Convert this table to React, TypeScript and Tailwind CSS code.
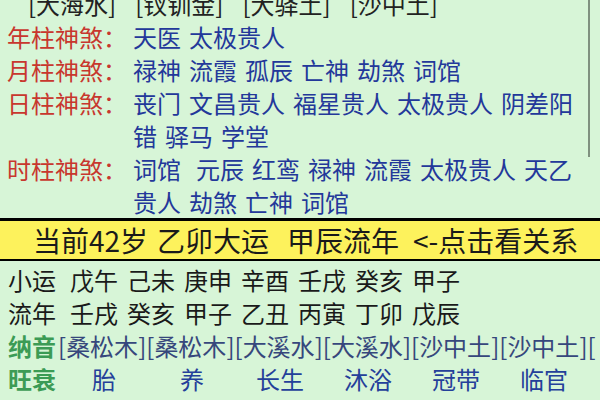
const FONT = "font-['Noto_Sans_CJK_SC','Noto_Sans',sans-serif]"

const shensha: { label: string; lines: string[][] }[] = [
  { label: "年柱神煞", lines: [["天医", "太极贵人"]] },
  { label: "月柱神煞", lines: [["禄神", "流霞", "孤辰", "亡神", "劫煞", "词馆"]] },
  {
    label: "日柱神煞",
    lines: [
      ["丧门", "文昌贵人", "福星贵人", "太极贵人", "阴差阳"],
      ["错", "驿马", "学堂"],
    ],
  },
  {
    label: "时柱神煞",
    lines: [
      ["词馆 ", "元辰", "红鸾", "禄神", "流霞", "太极贵人", "天乙"],
      ["贵人", "劫煞", "亡神", "词馆"],
    ],
  },
]

const xiaoyun = ["戊午", "己未", "庚申", "辛酉", "壬戌", "癸亥", "甲子"]
const liunian = ["壬戌", "癸亥", "甲子", "乙丑", "丙寅", "丁卯", "戊辰"]
const nayin = ["桑松木", "桑松木", "大溪水", "大溪水", "沙中土", "沙中土"]
const wangshuai = ["胎", "养", "长生", "沐浴", "冠带", "临官"]
const zizuo = ["绝胎", "死胎", "墓库", "病死", "衰病", "帝旺"]

export default function App() {
  return (
    <div className={`w-[600px] h-[400px] overflow-hidden bg-[#d7f5d7] text-[24px] ${FONT}`}>
      {/* 神煞 */}
      <div className="relative">
        <div className="absolute right-[10px] top-0 h-[170px] w-[2px] bg-[#7f917f]" />
        <div className="-mt-[13px] leading-[33px]">
          <div className="flex gap-[19px] pl-[28px] whitespace-nowrap text-[#222]">
            <span>[大海水]</span>
            <span>[钗钏金]</span>
            <span>[大驿土]</span>
            <span>[沙中土]</span>
          </div>
          {shensha.map((row) => (
            <div key={row.label} className="flex">
              <div className="w-[133px] shrink-0 pl-[7px] text-[#c8372e] whitespace-nowrap">
                {row.label}：
              </div>
              <div className="text-[#23389a]">
                {row.lines.map((line, i) => (
                  <div key={i} className="flex gap-[8px] whitespace-nowrap">
                    {line.map((w, j) => (
                      <span key={j} className={w.endsWith(" ") ? "mr-[7px]" : ""}>
                        {w.trim()}
                      </span>
                    ))}
                  </div>
                ))}
              </div>
            </div>
          ))}
        </div>
      </div>

      {/* 当前大运 */}
      <div className="border-t-[3px] border-b-[2px] border-black bg-[#fdf25c] h-[43px] flex items-center pl-[33px] text-[28px] text-[#1a1a1a] whitespace-nowrap">
        <span className="w-[124px] shrink-0">当前42岁</span>
        <span className="w-[130px] shrink-0">乙卯大运</span>
        <span className="w-[126px] shrink-0">甲辰流年</span>
        <span>&lt;-点击看关系</span>
      </div>

      {/* 运程 */}
      <div className="pt-[2px] pl-[8px] leading-[33px] whitespace-nowrap">
        <div className="flex gap-[9px] text-[#1a1a1a]">
          <span className="mr-[5px]">小运</span>
          {xiaoyun.map((s, i) => (
            <span key={i}>{s}</span>
          ))}
        </div>
        <div className="flex gap-[9px] text-[#1a1a1a]">
          <span className="mr-[5px]">流年</span>
          {liunian.map((s, i) => (
            <span key={i}>{s}</span>
          ))}
        </div>
        <div className="flex">
          <span className="w-[50px] shrink-0 font-bold text-[#3c9b55]">纳音</span>
          {nayin.map((s, i) => (
            <span key={i} className="text-[#36477c]">[{s}]</span>
          ))}
          <span className="text-[#36477c]">[</span>
        </div>
        <div className="flex">
          <span className="w-[52px] shrink-0 font-bold text-[#3c9b55]">旺衰</span>
          {wangshuai.map((s, i) => (
            <span key={i} className="w-[88px] shrink-0 text-center text-[#24409a]">
              {s}
            </span>
          ))}
        </div>
        <div className="flex gap-[29px]">
          <span className="mr-[5px] font-bold text-[#3c9b55]">自坐</span>
          {zizuo.map((s, i) => (
            <span key={i} className="text-[#24409a]">{s}</span>
          ))}
        </div>
      </div>
    </div>
  )
}
